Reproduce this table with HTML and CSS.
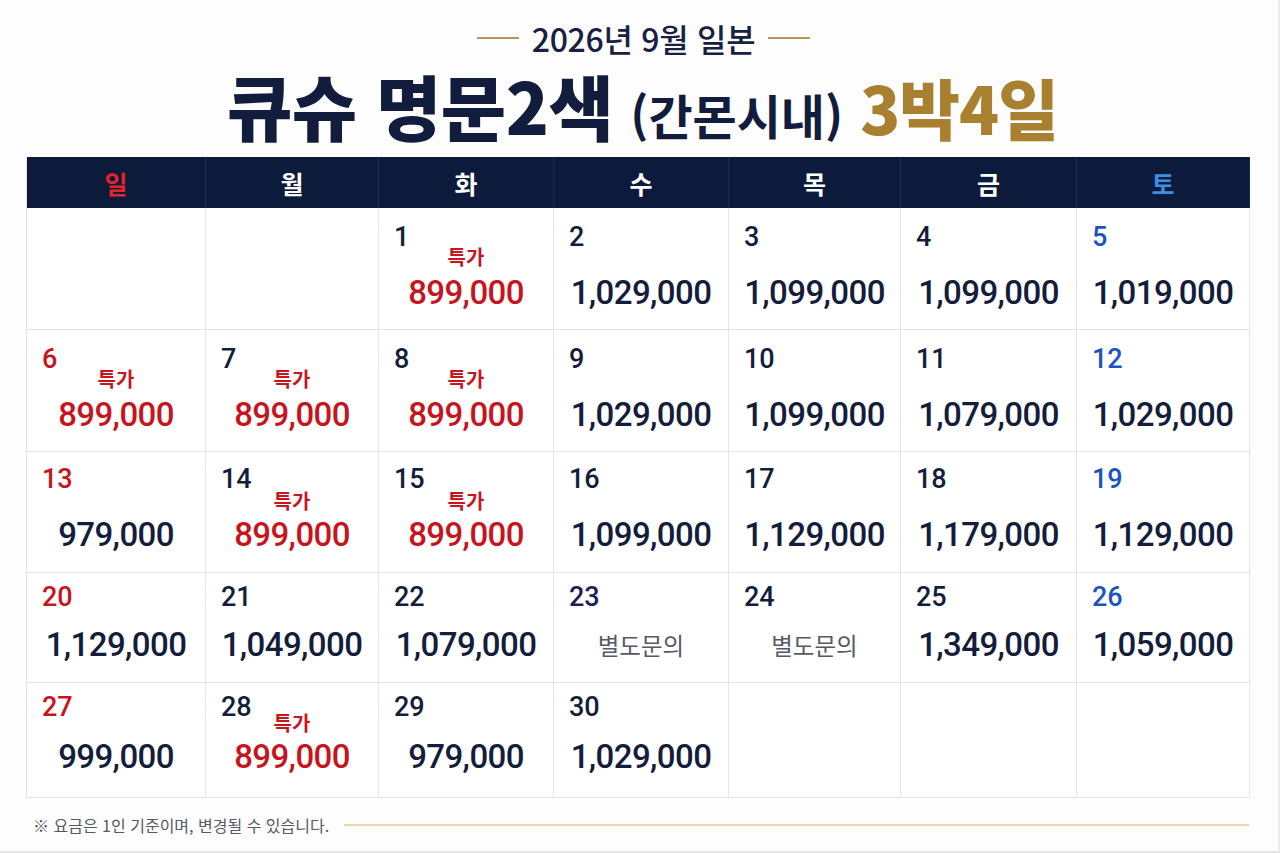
FILE: index.html
```html
<!DOCTYPE html>
<html lang="ko">
<head>
<meta charset="utf-8">
<title>2026년 9월 일본 큐슈 명문2색</title>
<link rel="stylesheet" href="styles.css">
</head>
<body>
<div class="page">
  <div class="subtitle"><span class="rule"></span><span class="sub-text">2026년 9월 일본</span><span class="rule"></span></div>
  <h1 class="title"><span class="t-main">큐슈 명문2색</span><span class="t-paren">(간몬시내)</span><span class="t-gold">3박4일</span></h1>

  <div class="cal">
    <div class="hd sun">일</div>
    <div class="hd">월</div>
    <div class="hd">화</div>
    <div class="hd">수</div>
    <div class="hd">목</div>
    <div class="hd">금</div>
    <div class="hd sat">토</div>

    <div class="week">
      <div class="cell"></div>
      <div class="cell"></div>
      <div class="cell"><div class="d">1</div><div class="tag">특가</div><div class="p red">899,000</div></div>
      <div class="cell"><div class="d">2</div><div class="tag"></div><div class="p">1,029,000</div></div>
      <div class="cell"><div class="d">3</div><div class="tag"></div><div class="p">1,099,000</div></div>
      <div class="cell"><div class="d">4</div><div class="tag"></div><div class="p">1,099,000</div></div>
      <div class="cell"><div class="d sat">5</div><div class="tag"></div><div class="p">1,019,000</div></div>
    </div>

    <div class="week">
      <div class="cell"><div class="d sun">6</div><div class="tag">특가</div><div class="p red">899,000</div></div>
      <div class="cell"><div class="d">7</div><div class="tag">특가</div><div class="p red">899,000</div></div>
      <div class="cell"><div class="d">8</div><div class="tag">특가</div><div class="p red">899,000</div></div>
      <div class="cell"><div class="d">9</div><div class="tag"></div><div class="p">1,029,000</div></div>
      <div class="cell"><div class="d">10</div><div class="tag"></div><div class="p">1,099,000</div></div>
      <div class="cell"><div class="d">11</div><div class="tag"></div><div class="p">1,079,000</div></div>
      <div class="cell"><div class="d sat">12</div><div class="tag"></div><div class="p">1,029,000</div></div>
    </div>

    <div class="week w3">
      <div class="cell"><div class="d sun">13</div><div class="tag"></div><div class="p">979,000</div></div>
      <div class="cell"><div class="d">14</div><div class="tag">특가</div><div class="p red">899,000</div></div>
      <div class="cell"><div class="d">15</div><div class="tag">특가</div><div class="p red">899,000</div></div>
      <div class="cell"><div class="d">16</div><div class="tag"></div><div class="p">1,099,000</div></div>
      <div class="cell"><div class="d">17</div><div class="tag"></div><div class="p">1,129,000</div></div>
      <div class="cell"><div class="d">18</div><div class="tag"></div><div class="p">1,179,000</div></div>
      <div class="cell"><div class="d sat">19</div><div class="tag"></div><div class="p">1,129,000</div></div>
    </div>

    <div class="week compact">
      <div class="cell"><div class="d sun">20</div><div class="tag"></div><div class="p">1,129,000</div></div>
      <div class="cell"><div class="d">21</div><div class="tag"></div><div class="p">1,049,000</div></div>
      <div class="cell"><div class="d">22</div><div class="tag"></div><div class="p">1,079,000</div></div>
      <div class="cell"><div class="d ink">23</div><div class="tag"></div><div class="p ask">별도문의</div></div>
      <div class="cell"><div class="d">24</div><div class="tag"></div><div class="p ask">별도문의</div></div>
      <div class="cell"><div class="d">25</div><div class="tag"></div><div class="p">1,349,000</div></div>
      <div class="cell"><div class="d sat">26</div><div class="tag"></div><div class="p">1,059,000</div></div>
    </div>

    <div class="week compact w5">
      <div class="cell"><div class="d sun">27</div><div class="tag"></div><div class="p">999,000</div></div>
      <div class="cell"><div class="d">28</div><div class="tag">특가</div><div class="p red">899,000</div></div>
      <div class="cell"><div class="d">29</div><div class="tag"></div><div class="p">979,000</div></div>
      <div class="cell"><div class="d">30</div><div class="tag"></div><div class="p">1,029,000</div></div>
      <div class="cell"></div>
      <div class="cell"></div>
      <div class="cell"></div>
    </div>
  </div>

  <div class="foot"><span class="note">※ 요금은 1인 기준이며, 변경될 수 있습니다.</span><span class="foot-rule"></span></div>
</div>
</body>
</html>
```

FILE: styles.css
```css
* { box-sizing: border-box; }
html, body { margin: 0; padding: 0; }
body {
  background: #ffffff;
  font-family: "Noto Sans CJK KR", "Noto Sans", sans-serif;
  color: #141d3b;
}
.page {
  width: 1280px;
  height: 853px;
  padding: 18px 0 0 26px;
  border-right: 2px solid #ececec;
  border-bottom: 2px solid #e4e4e4;
  background: #fdfdfd;
  overflow: hidden;
}
.subtitle {
  width: 1223px;
  height: 40px;
  padding-left: 12px;
  display: flex;
  align-items: center;
  justify-content: center;
  gap: 13px;
}
.rule {
  width: 42px;
  height: 2px;
  background: #b8955a;
}
.sub-text {
  font-size: 32px;
  font-weight: 500;
  line-height: 40px;
  color: #18213f;
  letter-spacing: -0.3px;
}
.title {
  margin: 10px 0 0;
  width: 1223px;
  height: 72px;
  padding-left: 10px;
  display: flex;
  align-items: baseline;
  justify-content: center;
  gap: 17px;
  line-height: 72px;
  font-weight: 900;
  color: #121c3c;
}
.t-main { font-size: 71px; letter-spacing: -0.5px; }
.t-paren { font-size: 48px; font-weight: 700; }
.t-gold { font-size: 66px; color: #a88030; letter-spacing: -1px; }

.cal {
  margin-top: 17px;
  width: 1223px;
  display: grid;
  grid-template-columns: 179px 173px 175px 175px 172px 176px 173px;
  grid-template-rows: 51px 122px 122px 121px 110px 115px;
  border-left: 1px solid #e2e2e6;
}
.week { display: contents; }
.hd {
  background: #0c1a3b;
  color: #ffffff;
  font-size: 25px;
  font-weight: 700;
  display: flex;
  align-items: center;
  justify-content: center;
  border-right: 1px solid #1d2a4a;
}
.hd.sun { color: #e4232a; }
.hd.sat { color: #3f8de2; }
.cell {
  background: #ffffff;
  border-right: 1px solid #e4e4e8;
  border-bottom: 1px solid #e4e4e8;
  padding: 20px 0 0 15px;
  display: flex;
  flex-direction: column;
}
.d {
  font-family: Roboto, "Noto Sans CJK KR", sans-serif;
  font-size: 27px;
  font-weight: 500;
  line-height: 18px;
  height: 18px;
  color: #141d3b;
}
.d.sun { color: #c8141c; }
.d.sat { color: #1a56c0; }
.d.ink { color: #221d5a; }
.tag {
  margin: 3px 15px 0 0;
  height: 16px;
  line-height: 16px;
  text-align: center;
  font-size: 20px;
  font-weight: 700;
  color: #c8161d;
}
.p {
  margin: 13px 15px 0 0;
  height: 30px;
  line-height: 30px;
  text-align: center;
  font-family: Roboto, "Noto Sans CJK KR", sans-serif;
  font-size: 33px;
  font-weight: 500;
  letter-spacing: -0.6px;
  color: #141d3b;
}
.p.red { color: #c8141c; }
.p.ask {
  font-family: "Noto Sans CJK KR", sans-serif;
  font-size: 23.5px;
  font-weight: 400;
  letter-spacing: 0;
  color: #555a63;
}
.w3 .cell { padding-top: 18px; }
.w3 .tag { margin-top: 5px; }
.w3 .p { margin-top: 11px; }
.compact .cell { padding-top: 15px; }
.compact .tag { margin-top: -1px; }
.compact .p { margin-top: 9px; }
.w5 .p { margin-top: 11px; }

.foot {
  margin-top: 14px;
  width: 1223px;
  height: 26px;
  display: flex;
  align-items: center;
  gap: 15px;
  padding-left: 7px;
}
.note {
  font-size: 16px;
  color: #555a63;
  white-space: nowrap;
}
.foot-rule {
  flex: 1;
  height: 2px;
  background: #e6d6b2;
}
```
